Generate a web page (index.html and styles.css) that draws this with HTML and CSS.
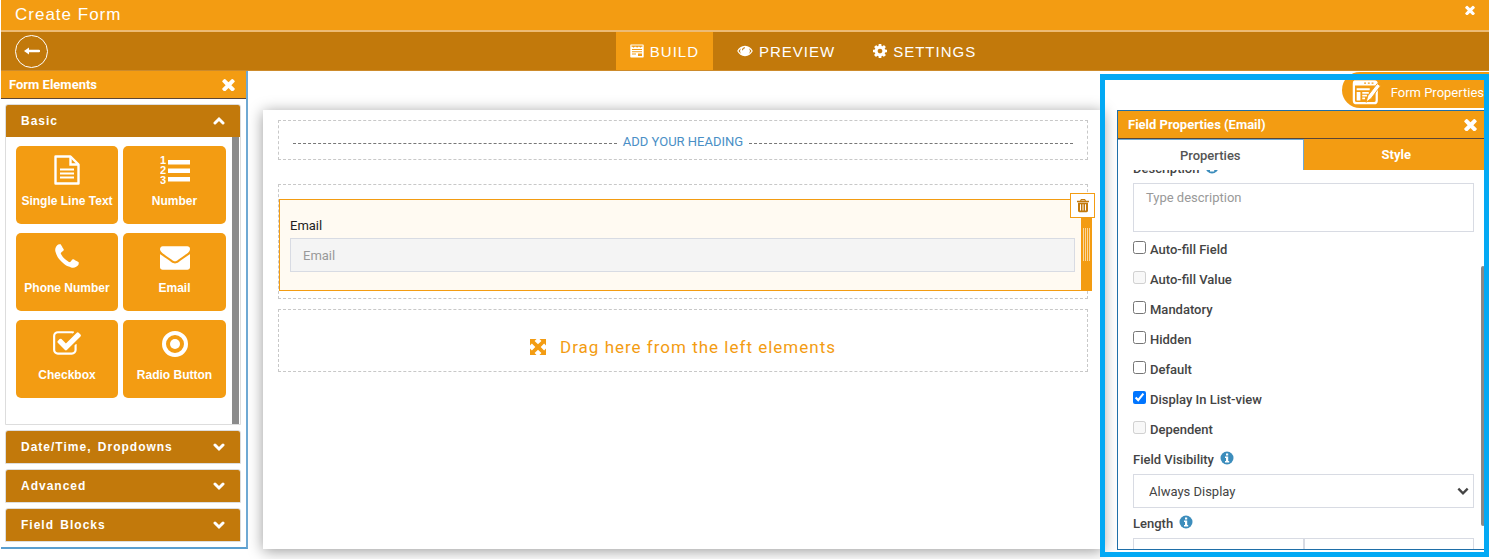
FILE: index.html
```html
<!DOCTYPE html>
<html lang="en">
<head>
    <meta charset="UTF-8">
    <meta name="viewport" content="width=device-width, initial-scale=1.0">
    <title>Create Form</title>
    <link rel="stylesheet" href="styles.css">
</head>
<body>
    <!-- shared icons -->
    <svg class="sprite" aria-hidden="true">
        <symbol id="i-close" viewBox="280 280 1232 1232"><path d="M1490 1322q0 40-28 68l-136 136q-28 28-68 28t-68-28l-294-294-294 294q-28 28-68 28t-68-28l-136-136q-28-28-28-68t28-68l294-294-294-294q-28-28-28-68t28-68l136-136q28-28 68-28t68 28l294 294 294-294q28-28 68-28t68 28l136 136q28 28 28 68t-28 68l-294 294 294 294q28 28 28 68z"/></symbol>
        <symbol id="i-down" viewBox="0 0 12 12"><path d="M2 4l4 4 4-4" fill="none" stroke="currentColor" stroke-width="3" stroke-linecap="round"/></symbol>
        <symbol id="i-up" viewBox="0 0 12 12"><path d="M2 8l4-4 4 4" fill="none" stroke="currentColor" stroke-width="3" stroke-linecap="round"/></symbol>
        <symbol id="i-info" viewBox="0 0 14 14"><circle cx="7" cy="7" r="6.5"/><path d="M6 2.5h2.200v2H6zM5 5.600h3.200v4.400h1v1.500H5v-1.500h1V7.100H5z" fill="#fff"/></symbol>
    </svg>

    <header class="titlebar">
        <h1>Create Form</h1>
        <button class="icon-btn" aria-label="Close"><svg class="icon-sm"><use href="#i-close"/></svg></button>
    </header>

    <nav class="toolbar">
        <button class="back" aria-label="Back">
            <svg viewBox="0 0 16 10"><path d="M0 5l5-3.500v2.300h10a1.200 1.200 0 0 1 0 2.400H5v2.300z"/></svg>
        </button>
        <div class="steps">
            <a href="#build" class="step active">
                <svg viewBox="0 0 14 14"><path d="M1 .5h12a.7.7 0 0 1 .7.7v11.600a.7.7 0 0 1-.7.7H1a.7.7 0 0 1-.7-.7V1.200A.7.7 0 0 1 1 .5zM1.500 1.500v1.200h1l1 1 1.200-1h1.400l1 1 1-1h1.400l1 1 1-1h1V1.500zM2 5v1h10V5zm0 2.300v1h10v-1zM2 9.600v1h4v-1zm6 0v2.400h4V9.600z" fill-rule="evenodd"/></svg>
                BUILD
            </a>
            <a href="#preview" class="step">
                <svg class="wide" viewBox="0 0 16 12"><path d="M8 .8C4.500.8 1.700 3 .2 6c1.500 3 4.300 5.200 7.800 5.200S14.300 9 15.800 6C14.300 3 11.500.8 8 .8zM4.200 3.300a4.300 4.300 0 0 0 .1 5.600A9 9 0 0 1 1.500 6a9 9 0 0 1 2.700-2.700zm7.600 0A9 9 0 0 1 14.500 6a9 9 0 0 1-2.800 2.900 4.300 4.300 0 0 0 .1-5.600zM8 2.300v1A2 2 0 0 0 6 5.200H5a3 3 0 0 1 3-2.900z" fill-rule="evenodd"/></svg>
                PREVIEW
            </a>
            <a href="#settings" class="step">
                <svg viewBox="128 128 1536 1536"><path d="M1152 896q0-106-75-181t-181-75-181 75-75 181 75 181 181 75 181-75 75-181zm512-109v222q0 12-8 23t-20 13l-185 28q-19 54-39 91 35 50 107 138 10 12 10 25t-9 23q-27 37-99 108t-94 71q-12 0-26-9l-138-108q-44 23-91 38-16 136-29 186-7 28-36 28h-222q-14 0-24.500-8.500t-11.500-21.500l-28-184q-49-16-90-37l-141 107q-10 9-25 9-14 0-25-11-126-114-165-168-7-10-7-23 0-12 8-23 15-21 51-66.500t54-70.500q-27-50-41-99l-183-27q-13-2-21-12.500t-8-23.500v-222q0-12 8-23t19-13l186-28q14-46 39-92-40-57-107-138-10-12-10-24 0-10 9-23 26-36 98.500-107.500t94.500-71.500q13 0 26 10l138 107q44-23 91-38 16-136 29-186 7-28 36-28h222q14 0 24.500 8.500t11.500 21.500l28 184q49 16 90 37l142-107q9-9 24-9 13 0 25 10 129 119 165 170 7 8 7 22 0 12-8 23-15 21-51 66.500t-54 70.500q26 50 41 98l183 28q13 2 21 12.500t8 23.500z"/></svg>
                SETTINGS
            </a>
        </div>
    </nav>

    <main class="workspace">
        <aside class="elements">
            <div class="panel-head">
                <h2>Form Elements</h2>
                <button class="icon-btn" aria-label="Close elements"><svg class="icon-md"><use href="#i-close"/></svg></button>
            </div>
            <div class="groups">
                <section class="group open">
                    <button class="group-head">Basic <svg><use href="#i-up"/></svg></button>
                    <div class="group-body">
                        <div class="tiles">
                            <button class="tile">
                                <svg viewBox="0 0 30 30"><path d="M3.500 1.500h15l8 8v19h-23z" fill="none" stroke="currentColor" stroke-width="2.400" stroke-linejoin="round"/><path d="M18.500 1.500v8h8" fill="none" stroke="currentColor" stroke-width="2.400"/><path d="M8 13.500h14v2H8zm0 4h14v2H8zm0 4h14v2H8z"/></svg>
                                Single Line Text
                            </button>
                            <button class="tile">
                                <svg viewBox="0 0 30 30"><path d="M8 5h22v4.500H8zm0 8.500h22V18H8zm0 8.500h22v4.500H8z"/><text x="0" y="9">1</text><text x="0" y="19">2</text><text x="0" y="29">3</text></svg>
                                Number
                            </button>
                            <button class="tile">
                                <svg viewBox="0 0 1792 1792"><path d="M1600 1240q0 27-10 70.500t-21 68.500q-21 50-122 106-94 51-186 51-27 0-53-3.500t-57.500-12.500-47-14.500-55.500-20.500-49-18q-98-35-175-83-127-79-264-216t-216-264q-48-77-83-175-3-9-18-49t-20.500-55.500-14.500-47-12.500-57.500-3.500-53q0-92 51-186 56-101 106-122 25-11 68.500-21t70.500-10q14 0 21 3 18 6 53 76 11 19 30 54t35 63.500 31 53.500q3 4 17.500 25t21.500 35.500 7 28.500q0 20-28.500 50t-62 55-62 53-28.500 46q0 9 5 22.500t8.500 20.500 14 24 11.500 19q76 137 174 235t235 174q2 1 19 11.500t24 14 20.500 8.500 22.500 5q18 0 46-28.500t53-62 55-62 50-28.500q14 0 28.500 7t35.500 21.500 25 17.500q25 15 53.500 31t63.500 35 54 30q70 35 76 53 3 7 3 21z"/></svg>
                                Phone Number
                            </button>
                            <button class="tile">
                                <svg viewBox="0 0 1792 1792"><path d="M1792 710v794q0 66-47 113t-113 47h-1472q-66 0-113-47t-47-113v-794q44 49 101 87 362 246 497 345 57 42 92.500 65.500t94.500 48 110 24.500h2q51 0 110-24.500t94.500-48 92.500-65.500q170-123 498-345 57-39 100-87zm0-294q0 79-49 151t-122 123q-376 261-468 325-10 7-42.500 31t-54 38.500-52 32.500-57.500 27-50 9h-2q-23 0-50-9t-57.500-27-52-32.500-54-38.500-42.500-31q-91-64-262-182.500t-205-142.500q-62-42-117-115.500t-55-136.500q0-78 41.500-130t118.500-52h1472q65 0 112.500 47t47.500 113z"/></svg>
                                Email
                            </button>
                            <button class="tile">
                                <svg viewBox="0 0 1792 1792"><path d="M1472 930v318q0 119-84.500 203.500t-203.500 84.500h-832q-119 0-203.500-84.500t-84.500-203.500v-832q0-119 84.500-203.500t203.500-84.500h832q63 0 117 25 15 7 18 23 3 17-9 29l-49 49q-10 10-23 10-3 0-9-2-23-6-45-6h-832q-66 0-113 47t-47 113v832q0 66 47 113t113 47h832q66 0 113-47t47-113v-254q0-13 9-22l64-64q10-10 23-10 6 0 12 3 20 8 20 29zm231-489l-814 814q-24 24-57 24t-57-24l-430-430q-24-24-24-57t24-57l110-110q24-24 57-24t57 24l263 263 647-647q24-24 57-24t57 24l110 110q24 24 24 57t-24 57z"/></svg>
                                Checkbox
                            </button>
                            <button class="tile">
                                <svg viewBox="0 0 30 30"><circle cx="15" cy="15" r="11" fill="none" stroke="currentColor" stroke-width="4"/><circle cx="15" cy="15" r="5"/></svg>
                                Radio Button
                            </button>
                        </div>
                        <div class="group-scroll"></div>
                    </div>
                </section>
                <section class="group"><button class="group-head">Date/Time, Dropdowns <svg><use href="#i-down"/></svg></button></section>
                <section class="group"><button class="group-head">Advanced <svg><use href="#i-down"/></svg></button></section>
                <section class="group"><button class="group-head">Field Blocks <svg><use href="#i-down"/></svg></button></section>
            </div>
        </aside>

        <section class="canvas">
            <div class="slot heading-slot"><a href="#heading">ADD YOUR HEADING</a></div>
            <div class="slot field-slot">
                <div class="field">
                    <label for="email">Email</label>
                    <input type="email" id="email" placeholder="Email">
                    <span class="grip"><i></i></span>
                    <button class="trash" aria-label="Delete field">
                        <svg viewBox="0 0 14 14"><path d="M5 .5h4l1 1.800h3v1.500H1V2.300h3zm.5 1.200l-.3.600h3.600l-.3-.6zM2 4.300h10v8q0 1.400-1.400 1.400H3.400Q2 13.700 2 12.300zm2 1.500v6.200h1V5.800zm2.500 0v6.200h1V5.800zm2.500 0v6.200h1V5.800z" fill-rule="evenodd"/></svg>
                    </button>
                </div>
            </div>
            <div class="slot drop-slot">
                <svg viewBox="0 0 16 16"><path d="M0 0h6.500L4.600 1.900 8 5.300l3.400-3.400L9.500 0H16v6.500l-1.900-1.900L10.700 8l3.400 3.400L16 9.500V16H9.500l1.900-1.900L8 10.700l-3.400 3.400L6.500 16H0V9.500l1.900 1.900L5.300 8 1.900 4.600 0 6.500z"/></svg>
                Drag here from the left elements
            </div>
        </section>

        <div class="side">
            <button class="form-props">
                <svg viewBox="0 0 32 30"><path d="M4 4h21q2.500 0 2.500 2.500V24q0 3-3 3H6q-3 0-3-3V6.500Q3 4 4 4z" fill="none" stroke="currentColor" stroke-width="2.400"/><path d="M3 3h24v5H3zM6 11h14v2H6zm0 4h4v9H6zm6 0h7v1.800h-7zm0 3h5v1.800h-5zm0 3h3v1.800h-3z"/><path d="M16 26l2-7L28 6l3.500 2.500L21.500 22z" stroke="#f39c12"/><path d="M14 5.500h2M18 5.500h2M22 5.500h2" stroke="#f39c12" stroke-width="1.500"/></svg>
                Form Properties
            </button>
            <aside class="props">
                <div class="panel-head">
                    <h2>Field Properties (Email)</h2>
                    <button class="icon-btn" aria-label="Close properties"><svg class="icon-md"><use href="#i-close"/></svg></button>
                </div>
                <div class="tabs">
                    <button class="tab selected">Properties</button>
                    <button class="tab">Style</button>
                </div>
                <div class="props-scroll">
                    <form class="props-form">
                        <label class="caption" for="desc">Description <svg><use href="#i-info"/></svg></label>
                        <textarea id="desc" placeholder="Type description"></textarea>
                        <label class="check"><input type="checkbox"> Auto-fill Field</label>
                        <label class="check"><input type="checkbox" disabled> Auto-fill Value</label>
                        <label class="check"><input type="checkbox"> Mandatory</label>
                        <label class="check"><input type="checkbox"> Hidden</label>
                        <label class="check"><input type="checkbox"> Default</label>
                        <label class="check"><input type="checkbox" checked> Display In List-view</label>
                        <label class="check"><input type="checkbox" disabled> Dependent</label>
                        <label class="caption" for="visibility">Field Visibility <svg><use href="#i-info"/></svg></label>
                        <div class="select">
                            <select id="visibility"><option>Always Display</option></select>
                            <svg viewBox="0 0 12 12"><path d="M2 4l4 4 4-4" fill="none" stroke="currentColor" stroke-width="2"/></svg>
                        </div>
                        <label class="caption" for="len-min">Length <svg><use href="#i-info"/></svg></label>
                        <div class="pair">
                            <input type="text" id="len-min">
                            <input type="text" aria-label="Maximum length">
                        </div>
                    </form>
                </div>
                <span class="thumb"></span>
            </aside>
            <div class="highlight"></div>
        </div>
    </main>
</body>
</html>
```

FILE: styles.css
```css
* {
    box-sizing: border-box;
}

body {
    margin: 0 2px 0 1px;
    height: 100vh;
    display: flex;
    flex-direction: column;
    overflow: hidden;
    background: #fff;
    font-family: Roboto, "Liberation Sans", sans-serif;
    font-size: 13px;
    color: #444;
}

button, input, textarea, select {
    font: inherit;
    color: inherit;
}

button {
    border: none;
    background: none;
    padding: 0;
    cursor: pointer;
}

svg {
    fill: currentColor;
}

h1, h2 {
    margin: 0;
}

a {
    text-decoration: none;
}

.sprite {
    position: absolute;
    width: 0;
    height: 0;
}

.icon-btn {
    display: flex;
    color: #fff;
}

.icon-sm {
    width: 10px;
    height: 10px;
}

.icon-md {
    width: 13px;
    height: 13px;
}

/* top bars */
.titlebar {
    flex: none;
    display: flex;
    justify-content: space-between;
    align-items: center;
    height: 32px;
    padding: 0 14px;
    background: #f39c12;
    border-bottom: 2px solid #edbb74;
    color: #fff;
}

.titlebar h1 {
    font: 17px "Liberation Sans", sans-serif;
    letter-spacing: 1px;
}

.titlebar .icon-btn {
    margin-bottom: 10px;
}

.toolbar {
    flex: none;
    display: grid;
    grid-template-columns: 1fr auto 1fr;
    align-items: center;
    height: 39px;
    padding: 0 14px;
    background: #c2790b;
    border-bottom: 1px solid #cd8b2b;
    color: #fff;
}

.back {
    display: flex;
    align-items: center;
    justify-content: center;
    width: 33px;
    height: 33px;
    border: 1px solid #fff;
    border-radius: 50%;
}

.back svg {
    width: 16px;
    height: 10px;
}

.steps {
    display: flex;
    height: 38px;
    margin-left: 116px;
}

.step {
    display: flex;
    align-items: center;
    gap: 6px;
    padding: 0 14px;
    margin-right: 10px;
    color: #fff;
    font: 15px "Liberation Sans", sans-serif;
    letter-spacing: 1px;
}

.step:last-child {
    margin-right: 0;
}

.step.active {
    background: #f39c12;
}

.step svg {
    width: 14px;
    height: 14px;
}

.step .wide {
    width: 16px;
    height: 12px;
}

/* columns */
.workspace {
    flex: 1;
    min-height: 0;
    display: grid;
    grid-template-columns: 247px 1fr 389px;
    padding-bottom: 9px;
}

.panel-head {
    display: flex;
    flex: none;
    justify-content: space-between;
    align-items: center;
    height: 28px;
    background: #f39c12;
    border-bottom: 1px solid #5b4636;
    color: #fff;
}

.panel-head h2 {
    font-size: 13px;
    font-weight: 700;
}

/* left panel */
.elements {
    align-self: start;
    position: relative;
    z-index: 1;
    background: #fff;
    border-right: 2px solid #6fa9d3;
    border-bottom: 2px solid #5a9fd0;
    font-family: "Liberation Sans", sans-serif;
}

.elements .panel-head {
    padding: 0 11px 0 8px;
}

.elements h2 {
    font-family: Roboto, sans-serif;
}

.groups {
    display: flex;
    flex-direction: column;
    gap: 5px;
    padding: 5px 5px 5px 4px;
}

.group {
    border: 1px solid #ddd;
    border-radius: 3px 3px 0 0;
    overflow: hidden;
}

.group-head {
    display: flex;
    justify-content: space-between;
    align-items: center;
    width: 100%;
    height: 32px;
    padding: 0 15px;
    background: #c2790b;
    color: #fff;
    font-size: 12px;
    font-weight: 700;
    letter-spacing: 1px;
    word-spacing: 2px;
}

.group-head svg {
    width: 12px;
    height: 12px;
}

.group-body {
    display: flex;
    justify-content: space-between;
    height: 287px;
    padding-left: 10px;
}

.tiles {
    display: grid;
    grid-template-columns: 102px 103px;
    grid-auto-rows: 78px;
    align-content: start;
    gap: 9px 5px;
    padding-top: 9px;
}

.tile {
    display: flex;
    flex-direction: column;
    align-items: center;
    gap: 9px;
    padding-top: 9px;
    border-radius: 5px;
    background: #f39c12;
    color: #fff;
    font-size: 12px;
    font-weight: 700;
    line-height: 14px;
    white-space: nowrap;
}

.tile svg {
    width: 30px;
    height: 30px;
}

.tile text {
    font: 700 11px "Liberation Sans", sans-serif;
}

.group-scroll {
    width: 7px;
    margin-right: 1px;
    background: #8b8b8b;
}

/* form canvas */
.canvas {
    margin: 39px -3px 1px 15px;
    padding: 10px 15px;
    background: #fff;
    box-shadow: 0 2px 14px rgba(0, 0, 0, 0.4);
}

.slot {
    border: 1px dashed #c8c8c8;
}

.heading-slot {
    display: flex;
    align-items: center;
    gap: 6px;
    height: 40px;
    padding: 0 14px;
}

.heading-slot::before,
.heading-slot::after {
    content: "";
    flex: 1;
    margin-top: 6px;
    border-top: 1px dashed #777;
}

.heading-slot a {
    margin-top: 3px;
    color: #4a8fc6;
}

.field-slot {
    height: 115px;
    margin: 24px 0 10px;
    padding-top: 14px;
}

.field {
    position: relative;
    height: 92px;
    margin-right: -5px;
    padding: 19px 16px 0 10px;
    background: #fffaf2;
    border: 1px solid #f39c12;
}

.field label {
    display: block;
    line-height: 14px;
    color: #222;
}

.field input {
    width: 100%;
    height: 34px;
    margin-top: 5px;
    padding: 0 12px;
    background: #f4f4f4;
    border: 1px solid #d8dbe3;
}

::placeholder {
    color: #999;
}

.grip {
    position: absolute;
    top: 0;
    right: 0;
    bottom: 0;
    display: flex;
    justify-content: center;
    width: 10px;
    background: #f39c12;
}

.grip i {
    width: 7px;
    height: 33px;
    margin-top: 28px;
    background: repeating-linear-gradient(to right, #fbd79f 0 1px, #f39c12 1px 2px);
}

.trash {
    position: absolute;
    top: -7px;
    right: -4px;
    display: flex;
    align-items: center;
    justify-content: center;
    width: 25px;
    height: 25px;
    background: #fff;
    border: 1px solid #f39c12;
    color: #c2790b;
}

.trash svg {
    width: 14px;
    height: 15px;
}

.drop-slot {
    display: flex;
    align-items: center;
    justify-content: center;
    gap: 14px;
    height: 63px;
    padding-top: 12px;
    color: #f39c12;
    font-size: 17px;
    letter-spacing: 1px;
}

.drop-slot svg {
    width: 16px;
    height: 16px;
}

/* right column */
.side {
    position: relative;
    display: flex;
    flex-direction: column;
    min-height: 0;
    padding-left: 17px;
}

.form-props {
    align-self: flex-end;
    flex: none;
    display: flex;
    align-items: center;
    gap: 9px;
    height: 36px;
    margin: 1px 0 2px;
    padding: 4px 5px 0 8px;
    border-radius: 18px 0 0 18px;
    background: #f39c12;
    color: #fff;
}

.form-props svg {
    width: 32px;
    height: 28px;
}

.props {
    position: relative;
    flex: 1;
    min-height: 0;
    display: flex;
    flex-direction: column;
    background: #fff;
    border: 1px solid #1f6fa8;
    border-right: none;
}

.props .panel-head {
    padding: 0 12px 0 10px;
}

.tabs {
    flex: none;
    display: grid;
    grid-template-columns: 1fr 1fr;
    height: 31px;
}

.tab {
    background: #f39c12;
    color: #fff;
    font-weight: 700;
}

.tab.selected {
    background: #fff;
    border: 1px solid #6fa9d3;
    border-width: 1px 1px 0 0;
    color: #555;
    font-weight: 500;
}

.props-scroll {
    flex: 1;
    min-height: 0;
    overflow: hidden;
}

/* scrolled down so that the first caption is cut off */
.props-form {
    margin-top: -17px;
    padding: 0 15px;
}

.caption {
    display: flex;
    align-items: center;
    gap: 6px;
    height: 30px;
    font-weight: 500;
}

.caption svg {
    width: 14px;
    height: 14px;
    margin-bottom: 2px;
    color: #3c8dbc;
}

.props-form textarea {
    display: block;
    width: 100%;
    height: 49px;
    padding: 6px 12px;
    border: 1px solid #d8dbe3;
    resize: none;
}

.check {
    display: flex;
    align-items: center;
    gap: 4px;
    height: 30px;
    font-weight: 500;
}

.check input {
    width: 13px;
    height: 13px;
    margin: 0 0 3px;
}

.props-form textarea + .check {
    margin-top: 2px;
}

.select {
    position: relative;
}

.select select {
    display: block;
    width: 100%;
    height: 34px;
    padding: 0 15px;
    appearance: none;
    background: #fff;
    border: 1px solid #d8dbe3;
    border-radius: 0;
}

.select svg {
    position: absolute;
    top: 10px;
    right: 4px;
    width: 14px;
    height: 14px;
    pointer-events: none;
}

.pair {
    display: grid;
    grid-template-columns: 1fr 1fr;
}

.pair input {
    min-width: 0;
    height: 34px;
    border: 1px solid #d8dbe3;
}

.thumb {
    position: absolute;
    top: 155px;
    right: 4px;
    width: 4px;
    height: 260px;
    border-radius: 2px;
    background: #888;
}

/* callout frame around the properties area */
.highlight {
    position: absolute;
    inset: 3px 0 -7px;
    border: 5px solid #03a9f4;
    border-top-width: 6px;
    pointer-events: none;
}
```
